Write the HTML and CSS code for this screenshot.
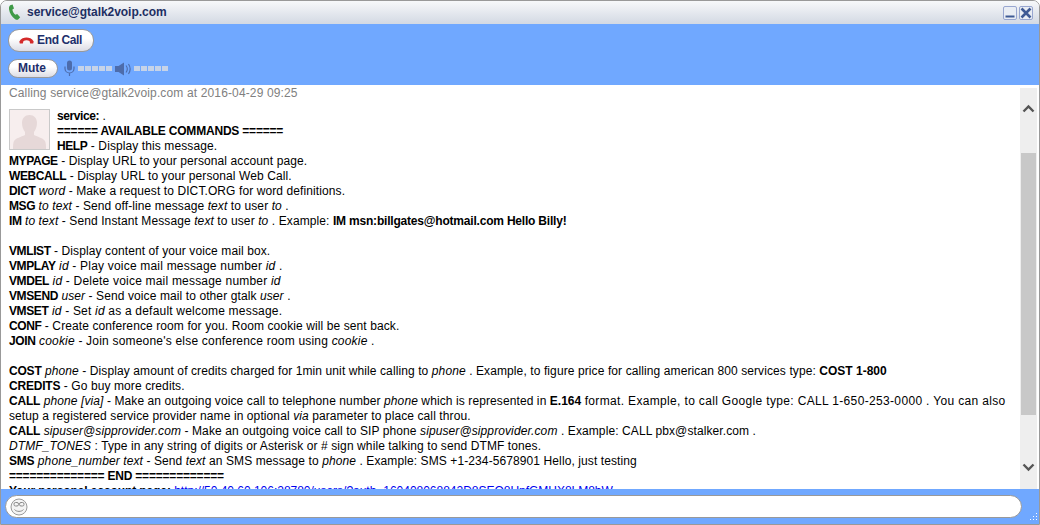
FILE: index.html
```html
<!DOCTYPE html>
<html lang="en">
<head>
<meta charset="utf-8">
<title>service@gtalk2voip.com</title>
<link rel="stylesheet" href="styles.css">
</head>
<body>
<div class="window">
  <header class="titlebar">
    <svg class="phone" width="14" height="17" viewBox="0 0 14 17"><path d="M2.2 1.2 4.6.4 6 4.4 4.4 5.6c.2 2 1.400 4 3 5.200L9.200 10l3 3.200-1.800 2c-.8.800-2 .800-3.200 0C4 13 1.600 9.200 1 5.200.8 3.600 1.200 2 2.200 1.200Z" fill="#3f9a48"/></svg>
    <span class="title">service@gtalk2voip.com</span>
    <span class="winbtns">
      <span class="winbtn"><svg width="12" height="12" viewBox="0 0 12 12"><rect x="1.500" y="8.500" width="9" height="2" fill="#3f5a94"/></svg></span>
      <span class="winbtn"><svg width="12" height="12" viewBox="0 0 12 12"><path d="M1.500 1.500 10.500 10.500M10.500 1.500 1.500 10.500" stroke="#3f5a94" stroke-width="2.600"/></svg></span>
    </span>
  </header>
  <section class="controls">
    <button class="btn endcall">
      <svg width="15" height="7" viewBox="0 0 15 7"><path d="M.3 4.500C2 1.300 5 .5 7.500.5s5.500.8 7.200 4l-.5 2h-3l-.7-2.500C9.500 3.500 8.500 3.300 7.500 3.300s-2 .2-3 .7l-.7 2.500h-3Z" fill="#d42a2a"/></svg>
      <span>End Call</span>
    </button>
    <div class="mediarow">
      <button class="btn mute">Mute</button>
      <svg class="mic" width="11" height="17" viewBox="0 0 11 17"><rect x="3" y="0.500" width="5" height="10" rx="2.500" fill="#4d6cab"/><path d="M1 6.500v2a4.500 4.500 0 0 0 9 0v-2M5.500 13v3" fill="none" stroke="#4d6cab" stroke-width="1.200"/></svg>
      <span class="level"><i></i><i></i><i></i><i></i><i></i></span>
      <svg class="speaker" width="17" height="14" viewBox="0 0 17 14"><path d="M0 4h3.500L9 .5v13L3.500 10H0Z" fill="#4d6cab"/><path d="M11 3.500c1.500 2 1.500 5 0 7M13.500 2c2 3 2 7 0 10" fill="none" stroke="#4d6cab" stroke-width="1.100"/></svg>
      <span class="level"><i></i><i></i><i></i><i></i><i></i></span>
    </div>
  </section>
  <main class="chat">
    <div class="log">
      <div class="status">Calling service@gtalk2voip.com at 2016-04-29 09:25</div>
      <div class="msg">
        <div class="upper">
          <svg class="avatar" width="41" height="41" viewBox="0 0 41 41"><rect x=".5" y=".5" width="40" height="40" fill="#f7eeee" stroke="#c9c9c9"/><path d="M13 14c0-5 3-8 7.500-8s7.500 3 7.500 8c0 4-1.500 7-3 9v3c4 2 9 3 11 6 1 2 1 5 1 8H4c0-3 0-6 1-8 2-3 7-4 11-6v-3c-1.500-2-3-5-3-9Z" fill="#e6d8d8"/></svg>
          <b>service:</b> .<br>
          <b class="long">====== AVAILABLE COMMANDS ======</b><br>
          <b>HELP</b> - Display this message.<br>
          <b>MYPAGE</b> - Display URL to your personal account page.<br>
          <b>WEBCALL</b> - Display URL to your personal Web Call.<br>
          <b>DICT</b> <i>word</i> - Make a request to DICT.ORG for word definitions.<br>
          <b>MSG</b> <i>to text</i> - Send off-line message <i>text</i> to user <i>to</i> .<br>
          <b>IM</b> <i>to text</i> - Send Instant Message <i>text</i> to user <i>to</i> . Example: <b class="long">IM msn:billgates@hotmail.com Hello Billy!</b><br>
          <br>
          <b>VMLIST</b> - Display content of your voice mail box.<br>
          <span class="loose"><b>VMPLAY</b> <i>id</i> - Play voice mail message number <i>id</i> .</span><br>
          <span class="loose"><b>VMDEL</b> <i>id</i> - Delete voice mail message number <i>id</i></span><br>
          <b>VMSEND</b> <i>user</i> - Send voice mail to other gtalk <i>user</i> .<br>
          <span class="loose"><b>VMSET</b> <i>id</i> - Set <i>id</i> as a default welcome message.</span><br>
          <b>CONF</b> - Create conference room for you. Room cookie will be sent back.<br>
          <span class="loose"><b>JOIN</b> <i>cookie</i> - Join someone's else conference room using <i>cookie</i> .</span><br>
          <br>
        </div>
        <div class="lower">
          <b>COST</b> <i>phone</i> - Display amount of credits charged for 1min unit while calling to <i>phone</i> . Example, to figure price for calling american 800 services type: <b class="plain">COST 1-800</b><br>
          <b>CREDITS</b> - Go buy more credits.<br>
          <b>CALL</b> <i>phone [via]</i> - Make an outgoing voice call to telephone number <i>phone</i> which is represented in <b class="plain">E.164</b> <span class="spread">format. Example, to call Google type: CALL 1-650-253-0000 . You can also</span> setup a registered service provider name in optional <i>via</i> parameter to place call throu.<br>
          <b>CALL</b> <i>sipuser@sipprovider.com</i> - Make an outgoing voice call to SIP phone <i>sipuser@sipprovider.com</i> . Example: CALL pbx@stalker.com .<br>
          <i>DTMF_TONES</i> : Type in any string of digits or Asterisk or # sign while talking to send DTMF tones.<br>
          <b>SMS</b> <i>phone_number text</i> - Send <i>text</i> an SMS message to <i>phone</i> . Example: SMS +1-234-5678901 Hello, just testing<br>
          <b>============== END =============</b><br>
          <b class="label">Your personal account page:</b> <a href="#">http://50.40.60.106:28780/users/?auth=160408068842D8SEQ8UnfGMHX8LM8bW</a>
        </div>
      </div>
    </div>
    <div class="scrollbar">
      <svg class="arrow up" width="13" height="9" viewBox="0 0 13 9"><path d="M1.500 7.500 6.500 2.500l5 5" fill="none" stroke="#555" stroke-width="2.400"/></svg>
      <div class="thumb"></div>
      <svg class="arrow down" width="13" height="9" viewBox="0 0 13 9"><path d="M1.500 1.500 6.500 6.500l5-5" fill="none" stroke="#555" stroke-width="2.400"/></svg>
    </div>
  </main>
  <footer class="composer">
    <div class="input">
      <svg width="18" height="18" viewBox="0 0 18 18"><circle cx="9" cy="9" r="8" fill="#f4f4f4" stroke="#9a9a9a"/><rect x="4" y="4.500" width="4.500" height="3.500" rx="1.500" fill="none" stroke="#8a8a8a"/><rect x="9.500" y="4.500" width="4.500" height="3.500" rx="1.500" fill="none" stroke="#8a8a8a"/><path d="M4.500 11.500c2 2.500 7 2.500 9 0" fill="none" stroke="#8a8a8a"/></svg>
    </div>
    <svg class="grip" width="9" height="9" viewBox="0 0 9 9" fill="#fff"><rect x="7" y="0" width="1" height="1"/><rect x="7" y="3" width="1" height="1"/><rect x="4" y="3" width="1" height="1"/><rect x="7" y="6" width="1" height="1"/><rect x="4" y="6" width="1" height="1"/><rect x="1" y="6" width="1" height="1"/></svg>
  </footer>
</div>
</body>
</html>
```

FILE: styles.css
```css
* { box-sizing: border-box; }
html, body { margin: 0; padding: 0; height: 100%; overflow: hidden; background: #fff; }
body { font: 12px/15px "Liberation Sans", Arial, sans-serif; color: #000; }

.window {
  width: 1040px;
  height: 525px;
  display: flex;
  flex-direction: column;
  border: 1px solid #999;
  border-radius: 7px 7px 0 0;
  overflow: hidden;
}

.titlebar {
  height: 23px;
  flex: none;
  display: flex;
  align-items: center;
  padding: 0 6px 0 7px;
  background: linear-gradient(#f7f8fa, #d3d9e3);
}
.phone { margin-right: 5px; }
.title { font-weight: bold; color: #1d2f63; letter-spacing: -.04px; }
.winbtns { margin-left: auto; display: flex; gap: 2px; }
.winbtn {
  width: 14px;
  height: 14px;
  display: flex;
  align-items: center;
  justify-content: center;
  border: 1px solid #98a6d0;
  border-radius: 2px;
  background: #e9edf4;
}

.controls {
  height: 61px;
  flex: none;
  background: #70a8ff;
  padding: 5px 7px 0;
  display: flex;
  flex-direction: column;
  align-items: flex-start;
  gap: 7px;
}
.btn {
  font: bold 12px/15px "Liberation Sans", Arial, sans-serif;
  color: #1d2f6b;
  border: 1px solid #999;
  border-radius: 11px;
  background: linear-gradient(#fff 40%, #dcdce4);
  display: flex;
  align-items: center;
  justify-content: center;
  padding: 0;
}
.endcall { width: 86px; height: 23px; gap: 3px; letter-spacing: -.4px; padding-right: 1px; }
.mute { width: 50px; height: 19px; padding-right: 2px; }
.mediarow { display: flex; align-items: center; height: 19px; }
.mic { margin: 0 3px 0 6px; }
.speaker { margin: 0 2px 0 3px; }
.level { display: flex; gap: 1px; }
.level i { width: 6px; height: 5px; background: #c6d3e8; }

.chat {
  flex: 1;
  min-height: 0;
  display: flex;
  background: #fff;
}
.log {
  flex: 1;
  min-width: 0;
  overflow: hidden;
  padding: 1px 0 0 8px;
}
.status { color: #808080; height: 23px; letter-spacing: .14px; }
.msg { color: #000; }
.upper { letter-spacing: .1px; }
.upper b { letter-spacing: -.4px; }
.upper b.long { letter-spacing: -.2px; }
.loose { letter-spacing: .2px; }
.lower { letter-spacing: .1px; }
.lower b { letter-spacing: -.2px; }
.lower b.plain { letter-spacing: 0; }
.lower b.label { letter-spacing: -.1px; }
.spread { letter-spacing: .34px; }
.msg a { color: #0000ee; text-decoration: none; letter-spacing: -.02px; }
.avatar { float: left; margin: 0 7px 0 0; }

.scrollbar {
  flex: none;
  width: 17px;
  margin: 3px 2px 0 0;
  background: #eee;
  display: flex;
  flex-direction: column;
  align-items: center;
}
.arrow { flex: none; }
.up { margin-top: 16px; }
.thumb { width: 15px; height: 262px; background: #c8c8c8; margin-top: 40px; }
.down { margin-top: 48px; }

.composer {
  height: 35px;
  flex: none;
  background: #70a8ff;
  padding: 6px 17px 0 4px;
  position: relative;
}
.input {
  height: 23px;
  background: #fff;
  border: 1px solid #999;
  border-radius: 12px;
  display: flex;
  align-items: center;
  padding-left: 4px;
}
.grip { position: absolute; right: 1px; bottom: 2px; }
```
